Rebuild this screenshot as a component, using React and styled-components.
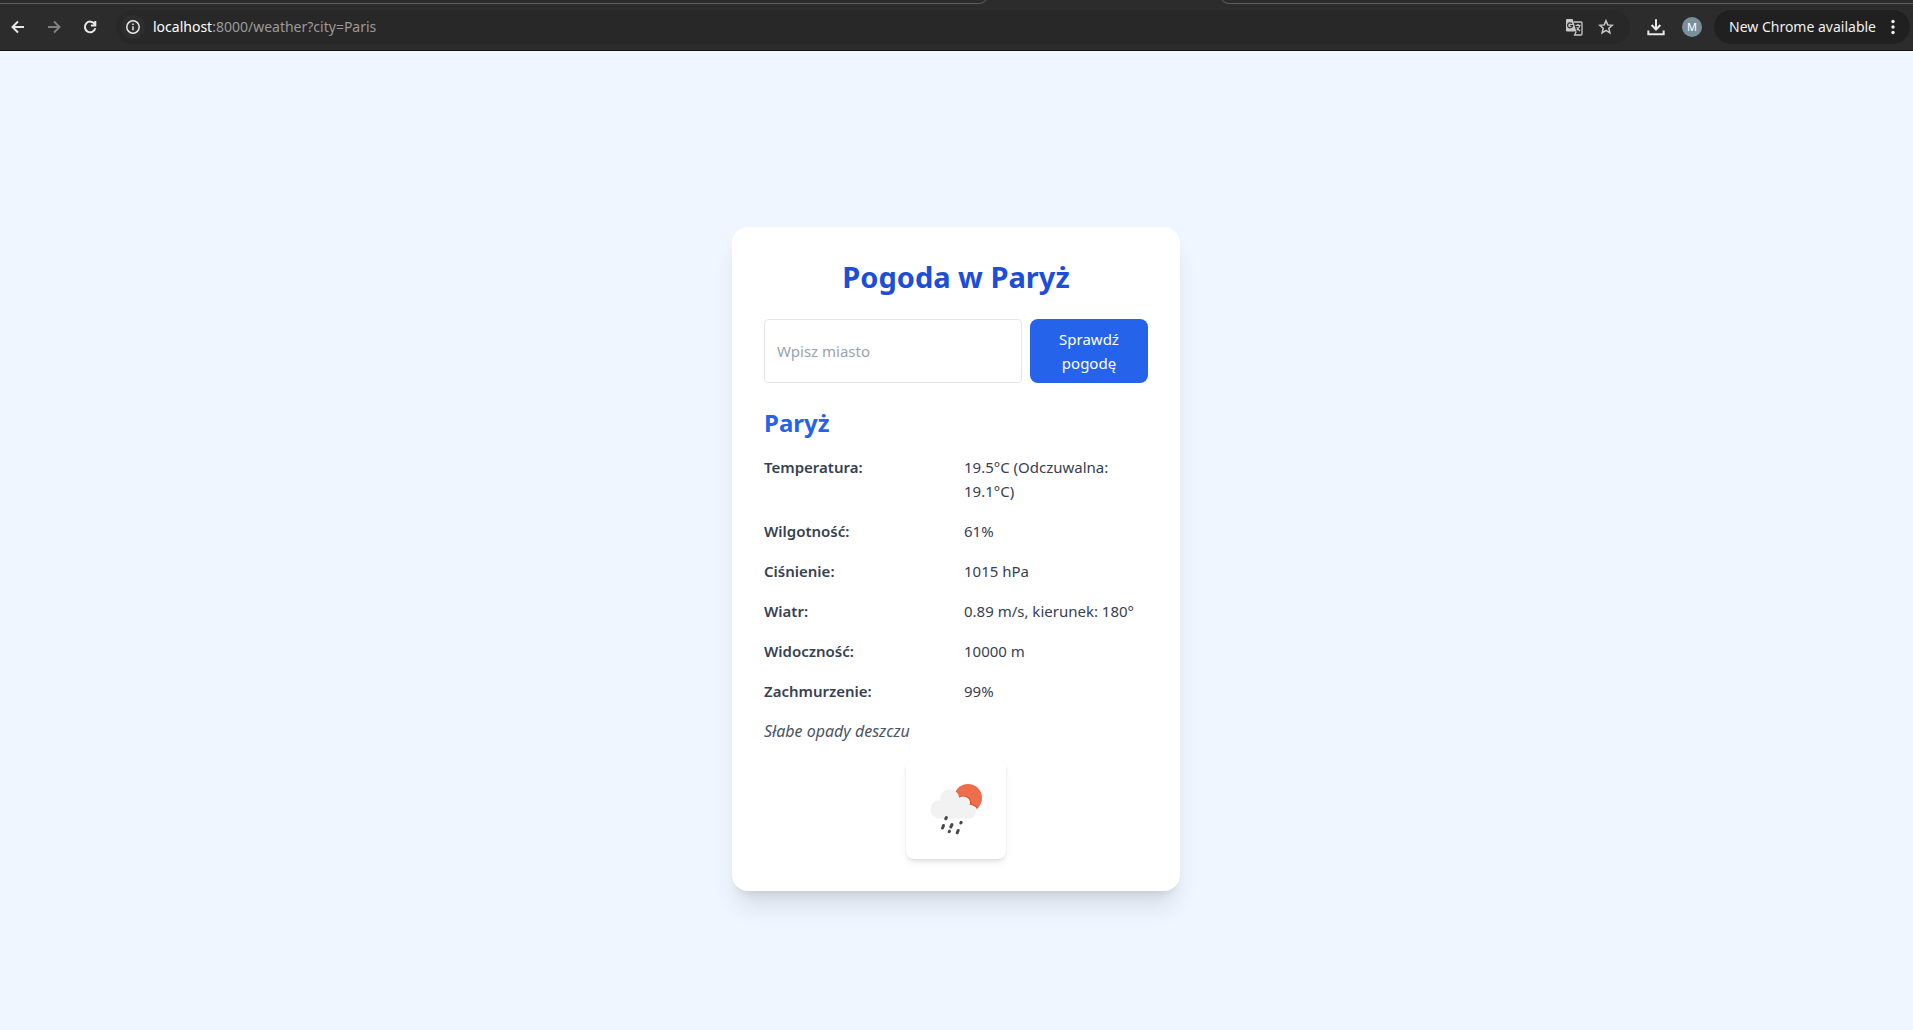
import React from 'react';
import styled, { createGlobalStyle } from 'styled-components';

const GlobalStyle = createGlobalStyle`
  *, *::before, *::after { box-sizing: border-box; }
  body { margin: 0; background: #eff6ff; font-family: "Noto Sans", "Open Sans", sans-serif; }
  h1, h2, p, dl, dt, dd { margin: 0; }
  button, input { font-family: inherit; }
`;

const Page = styled.div`
  display: flex;
  flex-direction: column;
  min-height: 100vh;
`;

const TabStrip = styled.div`
  display: grid;
  grid-template-columns: 986px 236px 1fr;
  height: 4px;
  background: #2c2c2c;
`;

const TabEdge = styled.div`
  border: 0 solid #5c5c5c;
  border-bottom-width: 1px;
  border-right-width: ${(p) => (p.$side === 'left' ? '1px' : '0')};
  border-left-width: ${(p) => (p.$side === 'right' ? '1px' : '0')};
  border-bottom-right-radius: ${(p) => (p.$side === 'left' ? '8px 4px' : '0')};
  border-bottom-left-radius: ${(p) => (p.$side === 'right' ? '8px 4px' : '0')};
`;

const Toolbar = styled.header`
  display: flex;
  align-items: center;
  height: 47px;
  padding: 0 3px 0 0;
  background: #2c2c2c;
  border-bottom: 1px solid #161616;
`;

const NavGroup = styled.nav`
  display: flex;
  width: 116px;
`;

const IconButton = styled.button`
  display: grid;
  place-items: center;
  flex: none;
  width: ${(p) => p.$width}px;
  height: 34px;
  padding: 0;
  border: 0;
  background: none;
  color: ${(p) => p.$color || '#e8e8e8'};
`;

const AddressBar = styled.div`
  display: flex;
  align-items: center;
  flex: 1;
  height: 34px;
  padding: 0 8px 0 5px;
  border-radius: 17px;
  background: #282828;
`;

const InfoButton = styled.button`
  display: grid;
  place-items: center;
  width: 24px;
  height: 24px;
  padding: 0;
  border: 0;
  border-radius: 50%;
  background: #2e2e2e;
  color: #e8e8e8;
`;

const Url = styled.span`
  flex: 1;
  padding-left: 8px;
  font-size: 14px;
  line-height: 20px;
  color: #9a9a9a;
`;

const Host = styled.span`
  color: #ffffff;
`;

const Avatar = styled.span`
  display: grid;
  place-items: center;
  width: 20px;
  height: 20px;
  border-radius: 50%;
  background: #78909c;
  color: #ffffff;
  font-size: 11px;
  line-height: 20px;
`;

const UpdateButton = styled.button`
  display: flex;
  align-items: center;
  justify-content: space-between;
  width: 196px;
  height: 34px;
  margin-left: 12px;
  padding: 0 15px;
  border: 0;
  border-radius: 17px;
  background: #202020;
  color: #f1f1f1;
  font-size: 14px;
  line-height: 20px;
  white-space: nowrap;
`;

const Main = styled.main`
  display: flex;
  flex: 1;
  align-items: center;
  justify-content: center;
  padding: 37px 1px 0 0;
`;

const Card = styled.section`
  width: 100%;
  max-width: 448px;
  padding: 32px;
  border-radius: 16px;
  background: #ffffff;
  box-shadow: 0 20px 25px -5px rgba(0, 0, 0, 0.1), 0 8px 10px -6px rgba(0, 0, 0, 0.1);
`;

const Title = styled.h1`
  margin-bottom: 24px;
  color: #1d4ed8;
  font-size: 29px;
  font-weight: 700;
  line-height: 36px;
  text-align: center;
`;

const SearchForm = styled.form`
  display: grid;
  grid-template-columns: 1fr 118px;
  gap: 8px;
  margin-bottom: 24px;
`;

const CityInput = styled.input`
  min-width: 0;
  padding: 8px 12px;
  border: 1px solid #e5e7eb;
  border-radius: 4px;
  background: #ffffff;
  color: #1f2937;
  font-size: 15px;
  line-height: 24px;
  &::placeholder { color: #9ca3af; opacity: 1; }
`;

const SubmitButton = styled.button`
  padding: 8px 24px;
  border: 0;
  border-radius: 8px;
  background: #2563eb;
  color: #ffffff;
  font-size: 15px;
  line-height: 24px;
`;

const City = styled.h2`
  margin-bottom: 16px;
  color: #2563eb;
  font-size: 24px;
  font-weight: 700;
  line-height: 32px;
`;

const Details = styled.dl`
  display: grid;
  grid-template-columns: 1fr 1fr;
  gap: 16px;
  margin-bottom: 16px;
  color: #374151;
  font-size: 15px;
  line-height: 24px;
`;

const Term = styled.dt`
  font-weight: 600;
`;

const Value = styled.dd``;

const Description = styled.p`
  margin-bottom: 16px;
  color: #4b5563;
  font-size: 16px;
  font-style: italic;
  line-height: 24px;
`;

const WeatherTile = styled.div`
  width: 100px;
  height: 100px;
  margin: 0 auto;
  border-radius: 8px;
  box-shadow: 0 4px 6px -1px rgba(0, 0, 0, 0.1), 0 2px 4px -2px rgba(0, 0, 0, 0.1);
`;

const Stroke = ({ children, size = 16, width = 2 }) => (
  <svg width={size} height={size} viewBox="0 0 16 16" fill="none" stroke="currentColor" strokeWidth={width} aria-hidden="true">
    {children}
  </svg>
);

const BackIcon = () => (
  <Stroke><path d="M14 8H3M8 2.5 2.5 8 8 13.5" /></Stroke>
);
const ForwardIcon = () => (
  <Stroke><path d="M2 8h11M8 2.5 13.5 8 8 13.5" /></Stroke>
);
const ReloadIcon = () => (
  <Stroke><path d="M12.6 5A5.3 5.3 0 1 0 13.3 9.3M13.3 2v4.4H8.9" /></Stroke>
);
const InfoIcon = () => (
  <Stroke size={16} width={1.5}>
    <circle cx="8" cy="8" r="6.2" />
    <path d="M8 7.2v4M8 4.6v1.5" />
  </Stroke>
);
const StarIcon = () => (
  <Stroke size={16} width={1.5}>
    <path d="m8 1.7 1.7 4.2 4.6.4-3.5 3 1.1 4.5L8 11.4l-3.9 2.4 1.1-4.5-3.5-3 4.6-.4z" />
  </Stroke>
);
const DownloadIcon = () => (
  <Stroke size={18} width={1.8}>
    <path d="M8 1v9M4.1 6.3 8 10.2l3.9-3.9M1.2 11v3.4h13.6V11" />
  </Stroke>
);
const TranslateIcon = () => (
  <svg width="18" height="18" viewBox="0 0 18 18" fill="none" aria-hidden="true">
    <path d="M2 1h5.600l3.800 12.500H2a1 1 0 0 1-1-1V2a1 1 0 0 1 1-1z" fill="#c8c8c8" />
    <path d="M8.600 4H16a1 1 0 0 1 1 1v11a1 1 0 0 1-1 1H9.600l1.600-3.500" stroke="#c8c8c8" strokeWidth="1.300" />
    <path d="M7 5.700a2.500 2.500 0 1 0 .6 2H5.200" stroke="#303030" strokeWidth="1.300" />
    <path d="M10.600 7.400h5M13 6.100v1.300M14.700 7.600c-.5 2-1.600 3.500-3 4.600M11.800 9.200c.7 1.600 1.800 2.700 3.300 3.800" stroke="#c8c8c8" strokeWidth="1.200" />
  </svg>
);
const MenuDots = () => (
  <svg width="4" height="16" viewBox="0 0 4 16" fill="currentColor" aria-hidden="true">
    <circle cx="2" cy="2.5" r="1.7" />
    <circle cx="2" cy="8" r="1.7" />
    <circle cx="2" cy="13.5" r="1.7" />
  </svg>
);

const RainIcon = () => (
  <svg width="100" height="100" viewBox="0 0 100 100" role="img" aria-label="Słabe opady deszczu">
    <clipPath id="sunDisc"><circle cx="62" cy="39" r="14" /></clipPath>
    <circle cx="62" cy="39" r="14" fill="#ec6e4c" />
    <g clipPath="url(#sunDisc)" fill="#ffffff" stroke="#e2532f" strokeWidth="1.5">
      <circle cx="57.500" cy="44.500" r="7.300" />
      <circle cx="64.500" cy="53.500" r="8" />
      <path d="M50 32v10" />
    </g>
    <path d="M52 50h10l3 8H52z" fill="#ffffff" />
    <path d="M33 59.500a9 9 0 0 1 1-18.300A9.700 9.700 0 0 1 53.300 38.800a6.500 6.500 0 0 1 10.200 6.700A7.300 7.300 0 0 1 65 59.500z" fill="#f2f2f2" />
    <g stroke="#484848" strokeWidth="3" strokeLinecap="round">
      <path d="m40.400 58.500-.7 1.300M37.500 66.500l-1 2.500M46 65.500l-1.200 2.500M55.200 63.300l-.4.700M43.500 72.200l-.3.500M52.200 71.500l-1 2.300" />
    </g>
  </svg>
);

const readings = [
  ['Temperatura:', '19.5°C (Odczuwalna: 19.1°C)'],
  ['Wilgotność:', '61%'],
  ['Ciśnienie:', '1015 hPa'],
  ['Wiatr:', '0.89 m/s, kierunek: 180°'],
  ['Widoczność:', '10000 m'],
  ['Zachmurzenie:', '99%'],
];

export default function App() {
  return (
    <Page>
      <GlobalStyle />
      <TabStrip>
        <TabEdge $side="left" />
        <span />
        <TabEdge $side="right" />
      </TabStrip>
      <Toolbar>
        <NavGroup>
          <IconButton $width={36} aria-label="Back"><BackIcon /></IconButton>
          <IconButton $width={36} $color="#808080" aria-label="Forward"><ForwardIcon /></IconButton>
          <IconButton $width={36} aria-label="Reload"><ReloadIcon /></IconButton>
        </NavGroup>
        <AddressBar>
          <InfoButton aria-label="Site information"><InfoIcon /></InfoButton>
          <Url><Host>localhost</Host>:8000/weather?city=Paris</Url>
          <IconButton $width={32} aria-label="Translate"><TranslateIcon /></IconButton>
          <IconButton $width={32} $color="#c8c8c8" aria-label="Bookmark"><StarIcon /></IconButton>
        </AddressBar>
        <IconButton $width={52} aria-label="Downloads"><DownloadIcon /></IconButton>
        <IconButton $width={20} aria-label="Profile"><Avatar>M</Avatar></IconButton>
        <UpdateButton>New Chrome available<MenuDots /></UpdateButton>
      </Toolbar>
      <Main>
        <Card>
          <Title>Pogoda w Paryż</Title>
          <SearchForm onSubmit={(e) => e.preventDefault()}>
            <CityInput type="text" name="city" placeholder="Wpisz miasto" aria-label="Wpisz miasto" />
            <SubmitButton type="submit">Sprawdź pogodę</SubmitButton>
          </SearchForm>
          <City>Paryż</City>
          <Details>
            {readings.map(([label, value]) => (
              <React.Fragment key={label}>
                <Term>{label}</Term>
                <Value>{value}</Value>
              </React.Fragment>
            ))}
          </Details>
          <Description>Słabe opady deszczu</Description>
          <WeatherTile><RainIcon /></WeatherTile>
        </Card>
      </Main>
    </Page>
  );
}
